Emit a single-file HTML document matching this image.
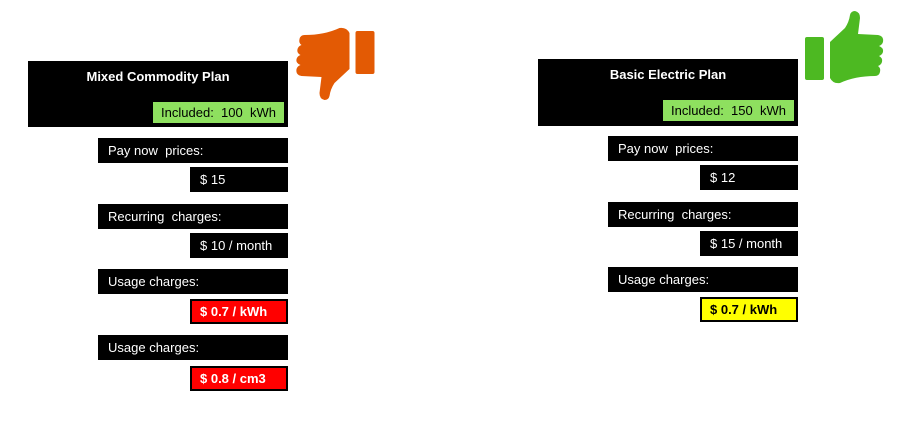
<!DOCTYPE html>
<html><head><meta charset="utf-8"><style>
body{margin:0;width:914px;height:423px;background:#fff;position:relative;overflow:hidden;font-family:"Liberation Sans",Arial,sans-serif;}
.b{position:absolute;background:#000;color:#fff;font-size:13px;box-sizing:border-box;}
.h{font-weight:bold;font-size:13px;text-align:center;padding-top:8px;}
.g{position:absolute;background:#8ee05f;color:#000;font-size:13px;line-height:21px;text-align:center;}
.l{padding-left:10px;line-height:25px;}
.v{padding-left:10px;line-height:25px;}
.r{position:absolute;box-sizing:border-box;border:2px solid #000;font-weight:bold;font-size:13px;padding-left:8px;line-height:21px;}
svg{position:absolute;left:0;top:0;}
</style></head><body>
<div class="b h" style="left:28px;top:61px;width:260px;height:66px;">Mixed Commodity Plan</div>
<div class="g" style="left:153px;top:102px;width:131px;height:21px;">Included:&nbsp; 100&nbsp; kWh</div>
<div class="b l" style="left:98px;top:138px;width:190px;height:25px;">Pay now&nbsp; prices:</div>
<div class="b v" style="left:190px;top:167px;width:98px;height:25px;">$ 15</div>
<div class="b l" style="left:98px;top:204px;width:190px;height:25px;">Recurring&nbsp; charges:</div>
<div class="b v" style="left:190px;top:233px;width:98px;height:25px;">$ 10 / month</div>
<div class="b l" style="left:98px;top:269px;width:190px;height:25px;">Usage charges:</div>
<div class="r" style="left:190px;top:299px;width:98px;height:25px;background:#ff0000;color:#fff;">$ 0.7 / kWh</div>
<div class="b l" style="left:98px;top:335px;width:190px;height:25px;">Usage charges:</div>
<div class="r" style="left:190px;top:366px;width:98px;height:25px;background:#ff0000;color:#fff;">$ 0.8 / cm3</div>

<div class="b h" style="left:538px;top:59px;width:260px;height:67px;">Basic Electric Plan</div>
<div class="g" style="left:663px;top:100px;width:131px;height:21px;">Included:&nbsp; 150&nbsp; kWh</div>
<div class="b l" style="left:608px;top:136px;width:190px;height:25px;">Pay now&nbsp; prices:</div>
<div class="b v" style="left:700px;top:165px;width:98px;height:25px;">$ 12</div>
<div class="b l" style="left:608px;top:202px;width:190px;height:25px;">Recurring&nbsp; charges:</div>
<div class="b v" style="left:700px;top:231px;width:98px;height:25px;">$ 15 / month</div>
<div class="b l" style="left:608px;top:267px;width:190px;height:25px;">Usage charges:</div>
<div class="r" style="left:700px;top:297px;width:98px;height:25px;background:#ffff00;color:#000;">$ 0.7 / kWh</div>

<svg width="914" height="423" viewBox="0 0 914 423">
<defs>
<g id="tu">
<rect x="805" y="37" width="19" height="43" rx="2"/>
<path d="M830 42 L845 28 Q849 22 850 15 Q851 11 855 11 Q860 12 860 18 L858 34 L878 35 Q884 36 883 42 Q882 45 879 46 Q884 48 883 52 Q882 55 879 56 Q883 58 882 62 Q881 65 878 66 Q881 68 880 72 Q879 76 875 76 Q855 76 840 83 Q833 84 830 78 Z"/>
</g>
</defs>
<use href="#tu" fill="#4db922"/>
<use href="#tu" fill="#e35a04" transform="matrix(-1 0 0 -1 1179.5 111)"/>
</svg>
</body></html>
